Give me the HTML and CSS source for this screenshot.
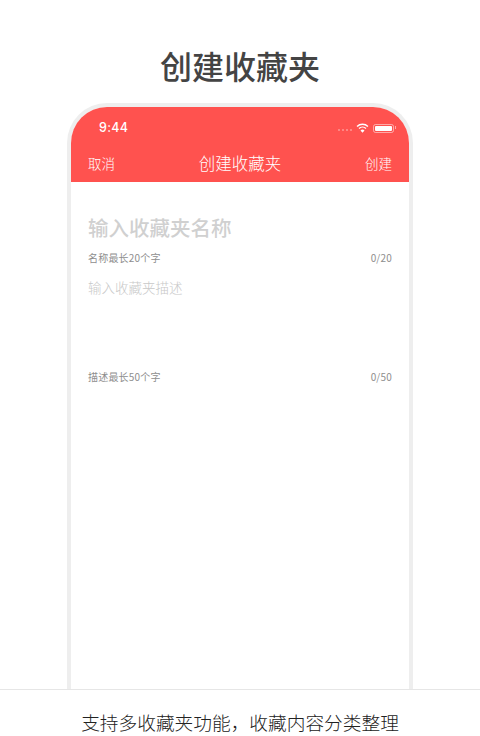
FILE: index.html
```html
<!DOCTYPE html>
<html lang="zh-CN">
<head>
  <meta charset="UTF-8">
  <title>创建收藏夹</title>
  <meta name="viewport" content="width=device-width, initial-scale=1.0">
  <link rel="stylesheet" href="styles.css">
</head>
<body>

  <h1 class="page-title">创建收藏夹</h1>

  <!-- Phone frame -->
  <div class="phone">
    <div class="header">
      <div class="status-bar">
        <span class="time">9:44</span>
        <div class="status-icons">
          <div class="signal"><i></i><i></i><i></i><i></i></div>
          <svg class="wifi" width="13" height="10" viewBox="0 0 14 11">
            <path d="M1 3.8a8.6 8.6 0 0 1 12 0" fill="none" stroke="#fff" stroke-width="1.6"/>
            <path d="M3.2 6.1a5.4 5.4 0 0 1 7.6 0" fill="none" stroke="#fff" stroke-width="1.6"/>
            <path d="M7 10.6 4.8 8.2a3.1 3.1 0 0 1 4.4 0z" fill="#fff"/>
          </svg>
          <div class="battery"><div class="battery-fill"></div></div>
        </div>
      </div>
      <div class="nav-bar">
        <span class="nav-btn">取消</span>
        <span class="nav-title">创建收藏夹</span>
        <span class="nav-btn">创建</span>
      </div>
    </div>

    <div class="form">
      <div class="name-input">输入收藏夹名称</div>
      <div class="hint-row">
        <span>名称最长20个字</span>
        <span>0/20</span>
      </div>
      <div class="desc-input">输入收藏夹描述</div>
      <div class="hint-row">
        <span>描述最长50个字</span>
        <span>0/50</span>
      </div>
    </div>
  </div>

  <div class="caption">支持多收藏夹功能，收藏内容分类整理</div>

</body>
</html>
```

FILE: styles.css
```css
html, body {
  height: 736px;
  overflow: hidden;
}

body {
  font-family: "Noto Sans CJK SC", "Noto Sans", sans-serif;
  margin: 0;
  padding: 0;
  background: #fff;
  display: flex;
  flex-direction: column;
  align-items: center;
}

.page-title {
  margin: 0;
  padding-top: 41px;
  height: 62px;
  font-size: 32px;
  line-height: 48px;
  font-weight: 500;
  color: #444;
}

.phone {
  width: 338px;
  flex: 1;
  min-height: 0;
  border: 4px solid #eeeeee;
  border-bottom: 0;
  border-radius: 40px 40px 0 0;
  overflow: hidden;
  background: #fff;
}

.header {
  background: #ff524f;
  color: #fff;
  height: 75px;
}

.status-bar {
  height: 31px;
  padding: 11px 15px 0 28px;
  box-sizing: border-box;
  display: flex;
  align-items: center;
  justify-content: space-between;
}

.time {
  font-family: "Inter", sans-serif;
  font-size: 12.5px;
  line-height: 20px;
  font-weight: 500;
  letter-spacing: 0.3px;
}

.status-icons {
  display: flex;
  align-items: center;
  gap: 4px;
  height: 20px;
}

.signal {
  display: flex;
  gap: 1.5px;
  margin-top: 4px;
}

.signal i {
  width: 2.5px;
  height: 2.5px;
  border-radius: 50%;
  background: rgba(255, 255, 255, 0.4);
}

.wifi {
  margin-bottom: 1px;
}

.battery {
  position: relative;
  width: 21px;
  height: 9px;
  border: 1px solid rgba(255, 255, 255, 0.5);
  border-radius: 2.5px;
  padding: 1px;
  box-sizing: border-box;
  display: flex;
}

/* battery nub */
.battery::after {
  content: "";
  position: absolute;
  right: -3px;
  top: 1.5px;
  width: 1px;
  height: 3px;
  background: rgba(255, 255, 255, 0.5);
}

.battery-fill {
  flex: 1;
  background: #fff;
  border-radius: 1px;
}

.nav-bar {
  height: 36px;
  margin-top: 7px;
  padding: 0 17px;
  display: flex;
  align-items: center;
  justify-content: space-between;
  font-weight: 300;
}

.nav-btn {
  font-size: 13.5px;
  color: #fff;
}

.nav-title {
  font-size: 16.5px;
  color: #fff;
}

.form {
  padding: 30px 17px 0;
}

.name-input {
  font-size: 20.5px;
  line-height: 30px;
  font-weight: 500;
  color: #d0d0d0;
}

.hint-row {
  display: flex;
  justify-content: space-between;
  font-size: 10px;
  line-height: 14px;
  letter-spacing: 0.2px;
  margin-top: 9px;
  color: #8e8e8e;
}

.desc-input {
  font-size: 13.5px;
  line-height: 20px;
  height: 84px;
  margin-top: 12px;
  color: #c8c8c8;
  font-weight: 300;
}

.caption {
  width: 100%;
  height: 46px;
  flex-shrink: 0;
  border-top: 1px solid #e6e6e6;
  text-align: center;
  font-size: 18.7px;
  line-height: 64px;
  color: #222;
  font-weight: 300;
}
```
